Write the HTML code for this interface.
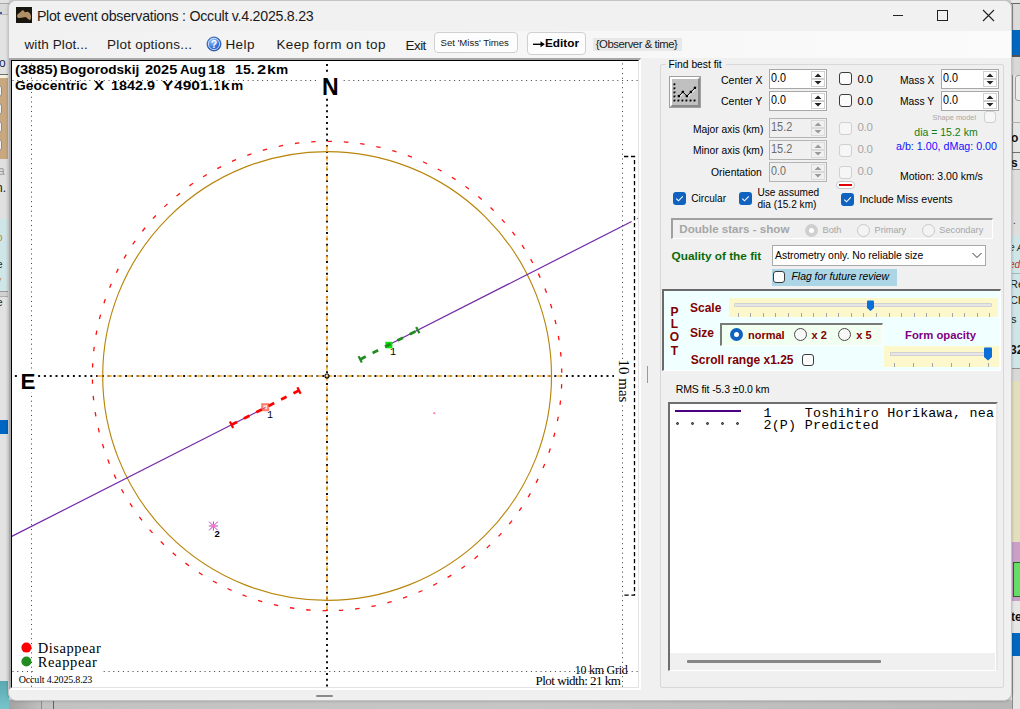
<!DOCTYPE html>
<html><head><meta charset="utf-8"><style>
html,body{margin:0;padding:0;width:1020px;height:709px;overflow:hidden;background:#d6d6d6;font-family:"Liberation Sans",sans-serif;}
.t{position:absolute;white-space:pre;}
.r{position:absolute;box-sizing:border-box;}
svg{position:absolute;}
</style></head><body>

<div class="r" style="left:0px;top:0px;width:9px;height:709px;background:#e2e2e2"></div>
<div class="r" style="left:0px;top:3px;width:9px;height:1px;background:#a8a8a8"></div>
<div class="r" style="left:0px;top:4px;width:9px;height:10px;background:#dadada"></div>
<div class="r" style="left:0px;top:14px;width:9px;height:1px;background:#b8b8b8"></div>
<div class="r" style="left:0px;top:74px;width:9px;height:1px;background:#6e6e6e"></div>
<div class="r" style="left:0px;top:75px;width:9px;height:3px;background:#f6f1dc"></div>
<div class="r" style="left:0px;top:78px;width:9px;height:81px;background:#c9a77f"></div>
<div class="r" style="left:-4px;top:85px;width:6px;height:12px;background:#f4f4f4;border:1px solid #8a8a8a;border-radius:3px"></div>
<div class="r" style="left:-4px;top:103px;width:6px;height:12px;background:#f4f4f4;border:1px solid #8a8a8a;border-radius:3px"></div>
<div class="r" style="left:-4px;top:121px;width:6px;height:12px;background:#f4f4f4;border:1px solid #8a8a8a;border-radius:3px"></div>
<div class="r" style="left:-4px;top:139px;width:6px;height:12px;background:#f4f4f4;border:1px solid #8a8a8a;border-radius:3px"></div>
<div class="r" style="left:0px;top:159px;width:9px;height:60px;background:#e0e0e0"></div>
<div class="r" style="left:0px;top:219px;width:9px;height:72px;background:#cfe6e8"></div>
<div class="r" style="left:0px;top:291px;width:9px;height:6px;background:#d2d2d2;border-top:1px solid #9a9a9a;border-bottom:1px solid #b0b0b0"></div>
<div class="r" style="left:0px;top:420px;width:9px;height:14px;background:#0066c4"></div>
<div class="r" style="left:0px;top:681px;width:9px;height:28px;background:linear-gradient(#5aa9b0,#78c4cc)"></div>
<div class="t" style="left:-1.00px;top:56.84px;font-size:12px;line-height:12px;font-family:'Liberation Sans', sans-serif;color:#1a2a5a;font-weight:normal;">o</div>
<div class="r" style="left:0px;top:12px;width:2px;height:2px;background:#103080;border-radius:1px"></div>
<div class="t" style="left:-2.00px;top:164.84px;font-size:12px;line-height:12px;font-family:'Liberation Sans', sans-serif;color:#999;font-weight:normal;">a</div>
<div class="t" style="left:-4.00px;top:181.84px;font-size:12px;line-height:12px;font-family:'Liberation Sans', sans-serif;color:#111;font-weight:normal;">n.</div>
<div class="t" style="left:-3.00px;top:232.53px;font-size:10px;line-height:10px;font-family:'Liberation Sans', sans-serif;color:#c08020;font-weight:normal;">o</div>
<div class="t" style="left:-3.00px;top:259.54px;font-size:10px;line-height:10px;font-family:'Liberation Sans', sans-serif;color:#222;font-weight:normal;">e</div>
<div class="t" style="left:-6.00px;top:275.54px;font-size:10px;line-height:10px;font-family:'Liberation Sans', sans-serif;color:#c08020;font-weight:normal;">ly</div>
<div class="t" style="left:-3.00px;top:297.54px;font-size:10px;line-height:10px;font-family:'Liberation Sans', sans-serif;color:#222;font-weight:normal;">e</div>
<div class="r" style="left:1011px;top:0px;width:9px;height:709px;background:#e6e6e6"></div>
<div class="r" style="left:1011px;top:3px;width:9px;height:1px;background:#666"></div>
<div class="r" style="left:1011px;top:4px;width:9px;height:26px;background:#dcdcdc"></div>
<div class="r" style="left:1012px;top:3px;width:1px;height:706px;background:#8a8a8a"></div>
<div class="r" style="left:1011px;top:30px;width:9px;height:25px;background:#0067c0"></div>
<div class="r" style="left:1011px;top:55px;width:9px;height:2px;background:#555"></div>
<div class="r" style="left:1011px;top:57px;width:9px;height:18px;background:#d8d8d8"></div>
<div class="r" style="left:1015px;top:75px;width:10px;height:26px;background:#ececec;border:1px solid #a0a0a0;border-radius:3px"></div>
<div class="r" style="left:1011px;top:122px;width:9px;height:1px;background:#b0b0b0"></div>
<div class="r" style="left:1011px;top:152px;width:9px;height:1px;background:#707070"></div>
<div class="r" style="left:1011px;top:169px;width:9px;height:1px;background:#909090"></div>
<div class="r" style="left:1011px;top:170px;width:9px;height:66px;background:#dedede"></div>
<div class="r" style="left:1011px;top:236px;width:9px;height:132px;background:#cfe6e8"></div>
<div class="r" style="left:1011px;top:273px;width:9px;height:1px;background:#a0b8b8"></div>
<div class="r" style="left:1011px;top:368px;width:9px;height:13px;background:#d8d8d8;border-top:1px solid #909090"></div>
<div class="r" style="left:1011px;top:381px;width:9px;height:161px;background:#e2dfbd"></div>
<div class="r" style="left:1011px;top:542px;width:9px;height:59px;background:#c8a0c8"></div>
<div class="r" style="left:1013px;top:562px;width:9px;height:35px;background:#66dd66;border:1px solid #226622"></div>
<div class="r" style="left:1011px;top:601px;width:9px;height:32px;background:#e6e6e6"></div>
<div class="r" style="left:1011px;top:633px;width:9px;height:23px;background:#0067c0"></div>
<div class="t" style="left:1011.00px;top:131.84px;font-size:12px;line-height:12px;font-family:'Liberation Sans', sans-serif;color:#111;font-weight:bold;">o</div>
<div class="t" style="left:1011.00px;top:156.84px;font-size:12px;line-height:12px;font-family:'Liberation Sans', sans-serif;color:#111;font-weight:bold;">s</div>
<div class="t" style="left:1013.00px;top:215.53px;font-size:10px;line-height:10px;font-family:'Liberation Sans', sans-serif;color:#333;font-weight:normal;">.</div>
<div class="t" style="left:1009.00px;top:242.53px;font-size:10px;line-height:10px;font-family:'Liberation Sans', sans-serif;color:#333;font-weight:normal;font-style:italic">e A</div>
<div class="t" style="left:1009.00px;top:259.54px;font-size:10px;line-height:10px;font-family:'Liberation Sans', sans-serif;color:#c03030;font-weight:normal;font-style:italic">ed</div>
<div class="t" style="left:1010.00px;top:278.69px;font-size:11px;line-height:11px;font-family:'Liberation Sans', sans-serif;color:#222;font-weight:normal;">Re</div>
<div class="t" style="left:1010.00px;top:294.69px;font-size:11px;line-height:11px;font-family:'Liberation Sans', sans-serif;color:#222;font-weight:normal;">Ch</div>
<div class="t" style="left:1011.00px;top:313.69px;font-size:11px;line-height:11px;font-family:'Liberation Sans', sans-serif;color:#222;font-weight:normal;">s</div>
<div class="t" style="left:1010.00px;top:343.84px;font-size:12px;line-height:12px;font-family:'Liberation Sans', sans-serif;color:#111;font-weight:bold;">32</div>
<div class="t" style="left:1011.00px;top:610.84px;font-size:12px;line-height:12px;font-family:'Liberation Sans', sans-serif;color:#111;font-weight:bold;">te</div>
<div class="r" style="left:9px;top:700px;width:1003px;height:9px;background:linear-gradient(90deg,#c2c2c2,#c6c6c6 50%,#b8b8b8)"></div>
<div class="r" style="left:9px;top:700px;width:32px;height:9px;background:linear-gradient(90deg,#a2a2a2,#c0c0c0)"></div>
<div class="r" style="left:41px;top:700px;width:1px;height:9px;background:#8c8c8c"></div>
<div class="r" style="left:53px;top:700px;width:1px;height:9px;background:#606060"></div>
<div class="r" style="left:8px;top:0px;width:1004px;height:701px;background:#f0f0f0;border:1px solid #c4c4c4;border-radius:8px;box-shadow:0 0 3px rgba(0,0,0,0.25)"></div>
<div class="r" style="left:9px;top:1px;width:1002px;height:30px;background:#f1f1f1;border-radius:7px 7px 0 0"></div>
<div class="r" style="left:9px;top:31px;width:1002px;height:27px;background:linear-gradient(90deg,#f1f1f1,#fbfbfb)"></div>
<svg style="left:16px;top:7px" width="16" height="16" viewBox="0 0 16 16">
<rect width="16" height="16" fill="#18140e"/>
<path d="M1,9 C1,7.5 2.5,6.5 4,5.5 C5,4.5 6,3 7,3.2 C8,3.4 8.5,5 9,5.2 C10,5 11,4.5 12,4.8 C13.5,5.5 14.5,7 15,9 C15,11 14.8,13 13.7,13 C12.5,12.8 11,11 9.5,10 C8,10 6,11 3.5,11 C2,11 1,10.5 1,9Z" fill="#b08e66"/>
</svg>
<div class="t" style="left:36.90px;top:8.98px;font-size:14.2px;line-height:14.2px;font-family:'Liberation Sans', sans-serif;color:#1b1b1b;font-weight:normal;letter-spacing:-0.258px;">Plot event observations : Occult v.4.2025.8.23</div>
<div class="r" style="left:893px;top:15px;width:10px;height:1px;background:#222"></div>
<div class="r" style="left:937px;top:10px;width:11px;height:11px;border:1px solid #222"></div>
<svg style="left:982px;top:9px" width="13" height="13" viewBox="0 0 13 13"><path d="M1,1 L12,12 M12,1 L1,12" stroke="#222" stroke-width="1.1"/></svg>
<div class="t" style="left:24.50px;top:38.07px;font-size:13.5px;line-height:13.5px;font-family:'Liberation Sans', sans-serif;color:#1b1b1b;font-weight:normal;letter-spacing:0.091px;">with Plot...</div>
<div class="t" style="left:107.10px;top:38.07px;font-size:13.5px;line-height:13.5px;font-family:'Liberation Sans', sans-serif;color:#1b1b1b;font-weight:normal;letter-spacing:0.214px;">Plot options...</div>
<svg style="left:206px;top:36px" width="16" height="16" viewBox="0 0 16 16">
<defs><radialGradient id="hg" cx="0.4" cy="0.3" r="0.8"><stop offset="0" stop-color="#9cc8ff"/><stop offset="0.6" stop-color="#2f6fd8"/><stop offset="1" stop-color="#1a47a8"/></radialGradient></defs>
<circle cx="8" cy="8" r="7" fill="url(#hg)" stroke="#2450a0" stroke-width="0.8"/>
<circle cx="8" cy="8" r="5.6" fill="none" stroke="#e8f0ff" stroke-width="0.8"/>
<text x="8" y="11.8" font-family="Liberation Sans" font-weight="bold" font-size="10" fill="#fff" text-anchor="middle">?</text>
</svg>
<div class="t" style="left:225.40px;top:38.07px;font-size:13.5px;line-height:13.5px;font-family:'Liberation Sans', sans-serif;color:#1b1b1b;font-weight:normal;letter-spacing:0.433px;">Help</div>
<div class="t" style="left:276.40px;top:38.27px;font-size:13.5px;line-height:13.5px;font-family:'Liberation Sans', sans-serif;color:#1b1b1b;font-weight:normal;letter-spacing:0.367px;">Keep form on top</div>
<div class="t" style="left:405.60px;top:38.57px;font-size:13.5px;line-height:13.5px;font-family:'Liberation Sans', sans-serif;color:#1b1b1b;font-weight:normal;letter-spacing:-0.600px;">Exit</div>
<div class="r" style="left:434px;top:32px;width:84px;height:21px;background:#fdfdfd;border:1px solid #d0d0d0;border-radius:4px"></div>
<div class="t" style="left:440.60px;top:38.17px;font-size:9.6px;line-height:9.6px;font-family:'Liberation Sans', sans-serif;color:#1b1b1b;font-weight:normal;letter-spacing:-0.027px;">Set 'Miss' Times</div>
<div class="r" style="left:527px;top:32px;width:59px;height:23px;background:#fdfdfd;border:1px solid #d0d0d0;border-radius:4px"></div>
<svg style="left:532px;top:40px" width="14" height="9" viewBox="0 0 14 9"><path d="M1,4.3 H11.5" stroke="#000" stroke-width="1.4"/><path d="M8.5,1.3 L12.8,4.3 L8.5,7.3 Z" fill="#000"/></svg>
<div class="t" style="left:544.90px;top:37.81px;font-size:11.8px;line-height:11.8px;font-family:'Liberation Sans', sans-serif;color:#000;font-weight:bold;letter-spacing:0.020px;">Editor</div>
<div class="r" style="left:593px;top:38px;width:89px;height:13px;background:#e8e8e8"></div>
<div class="t" style="left:595.80px;top:39.43px;font-size:11.3px;line-height:11.3px;font-family:'Liberation Sans', sans-serif;color:#1b1b1b;font-weight:normal;letter-spacing:-0.450px;">{Observer &amp; time}</div>
<div class="r" style="left:9px;top:58px;width:632px;height:632px;background:#fff;border-top:2px solid #a8a8a8;border-left:2px solid #a8a8a8;border-right:1px solid #fff;border-bottom:2px solid #fff"></div>
<div class="r" style="left:11px;top:60px;width:628px;height:628px;border-top:1px solid #000;border-left:1px solid #000;border-right:1px solid #e3e3e3;border-bottom:1px solid #e3e3e3"></div>
<div class="r" style="left:316px;top:695px;width:17px;height:2px;background:#8a8a8a;border-radius:1px"></div>
<div class="r" style="left:647px;top:366px;width:1px;height:17px;background:#9a9a9a"></div>
<svg style="left:12px;top:61px" width="626" height="626" viewBox="12 61 626 626"><g stroke="#3a3a3a" stroke-width="1">
<line x1="31.5" y1="63.45" x2="31.5" y2="687" stroke-dasharray="1 3.75"/>
<line x1="622.5" y1="63.45" x2="622.5" y2="687" stroke-dasharray="1 3.75"/>
<line x1="12.5" y1="80.5" x2="638" y2="80.5" stroke-dasharray="1 3.8"/>
<line x1="12.5" y1="671.5" x2="638" y2="671.5" stroke-dasharray="1 3.8"/>
</g>
<g stroke="#111" stroke-width="2" stroke-dasharray="2 3.8">
<line x1="14.9" y1="376" x2="614" y2="376"/>
<line x1="327" y1="63.9" x2="327" y2="687"/>
</g>
<g stroke="#ffaa22" stroke-opacity="0.72" stroke-width="2" stroke-dasharray="5 5">
<line x1="97.2" y1="376" x2="562" y2="376"/>
<line x1="327" y1="145.7" x2="327" y2="610.7"/>
</g>
<circle cx="327" cy="376" r="2" fill="none" stroke="#111" stroke-width="1.1"/>
<circle cx="327.1" cy="376.0" r="224.4" fill="none" stroke="#b8860b" stroke-width="1.15"/>
<circle cx="327.1" cy="376.0" r="234.7" fill="none" stroke="#ff1010" stroke-width="1.3" stroke-dasharray="4.4 11.985" stroke-dashoffset="8.18"/>
<g stroke="#7028a8" stroke-width="1.2" fill="none">
<line x1="11.4" y1="536.6" x2="265.5" y2="407.52"/>
<line x1="388.4" y1="345.08" x2="631.6" y2="221.5"/>
</g>
<circle cx="637.5" cy="218.5" r="0.8" fill="#a070d0"/>
<rect x="262.2" y="404.2" width="6" height="6" fill="rgba(255,150,130,0.35)" stroke="rgba(255,90,60,0.75)" stroke-width="2"/>
<rect x="385.4" y="341.8" width="7" height="6.5" fill="#00e600"/>
<line x1="231.50" y1="424.79" x2="299.00" y2="390.50" stroke="#ff0000" stroke-width="2.8" stroke-dasharray="6.2 7.7"/>
<line x1="233.13" y1="428.00" x2="229.87" y2="421.58" stroke="#ff0000" stroke-width="2.2"/>
<line x1="300.63" y1="393.71" x2="297.37" y2="387.29" stroke="#ff0000" stroke-width="2.2"/>
<line x1="360.20" y1="359.41" x2="417.80" y2="330.15" stroke="#228b22" stroke-width="2.8" stroke-dasharray="6.2 7.7"/>
<line x1="361.83" y1="362.62" x2="358.57" y2="356.20" stroke="#228b22" stroke-width="2.2"/>
<line x1="419.43" y1="333.36" x2="416.17" y2="326.94" stroke="#228b22" stroke-width="2.2"/>
<line x1="208.80" y1="526.00" x2="218.00" y2="526.00" stroke="#b048c0" stroke-width="1"/>
<line x1="213.40" y1="521.40" x2="213.40" y2="530.60" stroke="#b048c0" stroke-width="1"/>
<line x1="209.00" y1="521.60" x2="217.80" y2="530.40" stroke="#b048c0" stroke-width="1"/>
<line x1="209.00" y1="530.40" x2="217.80" y2="521.60" stroke="#b048c0" stroke-width="1"/>
<circle cx="213.4" cy="526.0" r="1.8" fill="#ff70c8"/>
<circle cx="434.3" cy="413.2" r="1.1" fill="#ff80c0"/>
<path d="M624,156.5 H634.5 V595.2 H624" fill="none" stroke="#000" stroke-width="1.3" stroke-dasharray="4.3 2.7"/>
<circle cx="26.4" cy="647.6" r="5" fill="#ff0000"/>
<circle cx="26.4" cy="661.5" r="5" fill="#228b22"/></svg>
<div class="t" style="left:14.89px;top:64.02px;font-size:12.5px;line-height:12.5px;font-family:'Liberation Sans', sans-serif;color:#000;font-weight:bold;transform:scaleX(1.1771);transform-origin:0 0;">(3885)</div>
<div class="t" style="left:59.83px;top:64.02px;font-size:12.5px;line-height:12.5px;font-family:'Liberation Sans', sans-serif;color:#000;font-weight:bold;transform:scaleX(1.0857);transform-origin:0 0;">Bogorodskij</div>
<div class="t" style="left:145.04px;top:64.02px;font-size:12.5px;line-height:12.5px;font-family:'Liberation Sans', sans-serif;color:#000;font-weight:bold;transform:scaleX(1.1587);transform-origin:0 0;">2025</div>
<div class="t" style="left:180.28px;top:64.02px;font-size:12.5px;line-height:12.5px;font-family:'Liberation Sans', sans-serif;color:#000;font-weight:bold;transform:scaleX(1.0647);transform-origin:0 0;">Aug</div>
<div class="t" style="left:208.02px;top:64.02px;font-size:12.5px;line-height:12.5px;font-family:'Liberation Sans', sans-serif;color:#000;font-weight:bold;transform:scaleX(1.2266);transform-origin:0 0;">18</div>
<div class="t" style="left:234.79px;top:64.02px;font-size:12.5px;line-height:12.5px;font-family:'Liberation Sans', sans-serif;color:#000;font-weight:bold;transform:scaleX(1.1338);transform-origin:0 0;">15.</div>
<div class="t" style="left:256.98px;top:64.02px;font-size:12.5px;line-height:12.5px;font-family:'Liberation Sans', sans-serif;color:#000;font-weight:bold;transform:scaleX(1.3115);transform-origin:0 0;">2</div>
<div class="t" style="left:266.66px;top:64.02px;font-size:12.5px;line-height:12.5px;font-family:'Liberation Sans', sans-serif;color:#000;font-weight:bold;transform:scaleX(1.2623);transform-origin:0 0;">k</div>
<div class="t" style="left:276.12px;top:64.02px;font-size:12.5px;line-height:12.5px;font-family:'Liberation Sans', sans-serif;color:#000;font-weight:bold;transform:scaleX(1.0938);transform-origin:0 0;">m</div>
<div class="t" style="left:15.04px;top:79.62px;font-size:12.5px;line-height:12.5px;font-family:'Liberation Sans', sans-serif;color:#000;font-weight:bold;transform:scaleX(1.1101);transform-origin:0 0;">Geocentric</div>
<div class="t" style="left:93.88px;top:79.62px;font-size:12.5px;line-height:12.5px;font-family:'Liberation Sans', sans-serif;color:#000;font-weight:bold;transform:scaleX(1.2099);transform-origin:0 0;">X</div>
<div class="t" style="left:110.58px;top:79.62px;font-size:12.5px;line-height:12.5px;font-family:'Liberation Sans', sans-serif;color:#000;font-weight:bold;transform:scaleX(1.1486);transform-origin:0 0;">1842.9</div>
<div class="t" style="left:161.53px;top:79.62px;font-size:12.5px;line-height:12.5px;font-family:'Liberation Sans', sans-serif;color:#000;font-weight:bold;transform:scaleX(1.3544);transform-origin:0 0;">Y</div>
<div class="t" style="left:174.25px;top:79.62px;font-size:12.5px;line-height:12.5px;font-family:'Liberation Sans', sans-serif;color:#000;font-weight:bold;transform:scaleX(1.2417);transform-origin:0 0;">4901.</div>
<div class="t" style="left:214.31px;top:79.62px;font-size:12.5px;line-height:12.5px;font-family:'Liberation Sans', sans-serif;color:#000;font-weight:bold;transform:scaleX(0.8621);transform-origin:0 0;">1</div>
<div class="t" style="left:221.28px;top:79.62px;font-size:12.5px;line-height:12.5px;font-family:'Liberation Sans', sans-serif;color:#000;font-weight:bold;transform:scaleX(1.2459);transform-origin:0 0;">k</div>
<div class="t" style="left:230.62px;top:79.62px;font-size:12.5px;line-height:12.5px;font-family:'Liberation Sans', sans-serif;color:#000;font-weight:bold;transform:scaleX(1.0938);transform-origin:0 0;">m</div>
<div class="r" style="left:317.5px;top:73.5px;width:23px;height:24px;background:#fff"></div>
<div class="t" style="left:322.00px;top:75.53px;font-size:23px;line-height:23px;font-family:'Liberation Sans', sans-serif;color:#000;font-weight:bold;">N</div>
<div class="r" style="left:18px;top:371px;width:20px;height:21px;background:#fff"></div>
<div class="t" style="left:20.50px;top:370.55px;font-size:22.5px;line-height:22.5px;font-family:'Liberation Sans', sans-serif;color:#000;font-weight:bold;">E</div>
<div class="t" style="left:267.00px;top:411.33px;font-size:10px;line-height:10px;font-family:'Liberation Mono', monospace;color:#000;font-weight:normal;">1</div>
<div class="t" style="left:390.00px;top:347.94px;font-size:10px;line-height:10px;font-family:'Liberation Mono', monospace;color:#000;font-weight:normal;">1</div>
<div class="t" style="left:214.50px;top:528.66px;font-size:9.5px;line-height:9.5px;font-family:'Liberation Sans', sans-serif;color:#000;font-weight:bold;">2</div>
<div class="t" style="left:602px;top:373px;width:44px;height:16px;line-height:16px;font-family:'Liberation Serif',serif;font-size:15px;color:#000;background:#fff;transform:rotate(90deg);text-align:center">10 mas</div>
<div class="r" style="left:35px;top:641px;width:67px;height:32px;background:#fff"></div>
<div class="t" style="left:37.70px;top:640.56px;font-size:14.5px;line-height:14.5px;font-family:'Liberation Serif', serif;color:#000;font-weight:normal;letter-spacing:0.537px;">Disappear</div>
<div class="t" style="left:37.70px;top:654.66px;font-size:14.5px;line-height:14.5px;font-family:'Liberation Serif', serif;color:#000;font-weight:normal;letter-spacing:0.643px;">Reappear</div>
<div class="t" style="left:18.80px;top:674.62px;font-size:10px;line-height:10px;font-family:'Liberation Serif', serif;color:#000;font-weight:normal;letter-spacing:-0.188px;">Occult 4.2025.8.23</div>
<div class="t" style="left:574.80px;top:663.85px;font-size:12px;line-height:12px;font-family:'Liberation Serif', serif;color:#000;font-weight:normal;letter-spacing:-0.267px;">10 km Grid</div>
<div class="t" style="left:535.50px;top:673.81px;font-size:13px;line-height:13px;font-family:'Liberation Serif', serif;color:#000;font-weight:normal;letter-spacing:-0.512px;">Plot width: 21 km</div>
<div class="r" style="left:660px;top:64px;width:344px;height:624px;border:1px solid #d8d8d8;border-radius:2px"></div>
<div class="r" style="left:666px;top:58px;width:60px;height:12px;background:#f0f0f0"></div>
<div class="t" style="left:668.50px;top:60.08px;font-size:10.3px;line-height:10.3px;font-family:'Liberation Sans', sans-serif;color:#000;font-weight:normal;">Find best fit</div>
<svg style="left:669px;top:76px" width="32" height="32" viewBox="669 76 32 32">
<rect x="669" y="76" width="32" height="32" fill="#a0a0a0"/>
<path d="M670,77 H700 V107 H670Z" fill="#8a8a8a"/>
<path d="M670,77 H700 L698,79 H672 V105 L670,107Z" fill="#fff"/>
<rect x="672" y="79" width="26" height="26" fill="#c0c0c0"/>
<rect x="674.0" y="83.9" width="2" height="2" fill="#fff"/>
<rect x="674.0" y="87.9" width="2" height="2" fill="#fff"/>
<rect x="674.0" y="92.0" width="2" height="2" fill="#fff"/>
<rect x="674.0" y="96.0" width="2" height="2" fill="#fff"/>
<rect x="674.0" y="100.1" width="2" height="2" fill="#fff"/>
<rect x="678.0" y="100.1" width="2" height="2" fill="#fff"/>
<rect x="682.0" y="100.1" width="2" height="2" fill="#fff"/>
<rect x="686.0" y="100.1" width="2" height="2" fill="#fff"/>
<rect x="690.1" y="100.1" width="2" height="2" fill="#fff"/>
<rect x="694.1" y="100.1" width="2" height="2" fill="#fff"/>
<rect x="678.4" y="95.6" width="2" height="2" fill="#fff"/>
<rect x="682.4" y="91.5" width="2" height="2" fill="#fff"/>
<rect x="686.4" y="95.6" width="2" height="2" fill="#fff"/>
<rect x="690.4" y="91.5" width="2" height="2" fill="#fff"/>
<rect x="694.5" y="87.4" width="2" height="2" fill="#fff"/>
<polyline points="678.9,96.1 682.9,92 686.9,96.1 690.9,92 695,87.9" fill="none" stroke="#fff" stroke-width="1" transform="translate(0.8,0.8)"/>
<polyline points="678.9,96.1 682.9,92 686.9,96.1 690.9,92 695,87.9" fill="none" stroke="#000" stroke-width="1"/>
<rect x="673.5" y="83.4" width="2" height="2" fill="#000"/>
<rect x="673.5" y="87.4" width="2" height="2" fill="#000"/>
<rect x="673.5" y="91.5" width="2" height="2" fill="#000"/>
<rect x="673.5" y="95.5" width="2" height="2" fill="#000"/>
<rect x="673.5" y="99.6" width="2" height="2" fill="#000"/>
<rect x="677.5" y="99.6" width="2" height="2" fill="#000"/>
<rect x="681.5" y="99.6" width="2" height="2" fill="#000"/>
<rect x="685.5" y="99.6" width="2" height="2" fill="#000"/>
<rect x="689.6" y="99.6" width="2" height="2" fill="#000"/>
<rect x="693.6" y="99.6" width="2" height="2" fill="#000"/>
<rect x="677.7" y="94.9" width="2.4" height="2.4" fill="#000"/>
<rect x="681.7" y="90.8" width="2.4" height="2.4" fill="#000"/>
<rect x="685.7" y="94.9" width="2.4" height="2.4" fill="#000"/>
<rect x="689.7" y="90.8" width="2.4" height="2.4" fill="#000"/>
<rect x="693.8" y="86.7" width="2.4" height="2.4" fill="#000"/>
</svg>
<div class="t" style="left:721.00px;top:74.91px;font-size:10.5px;line-height:10.5px;font-family:'Liberation Sans', sans-serif;color:#000;font-weight:normal;">Center X</div>
<div class="t" style="left:721.00px;top:96.41px;font-size:10.5px;line-height:10.5px;font-family:'Liberation Sans', sans-serif;color:#000;font-weight:normal;">Center Y</div>
<div class="r" style="left:769px;top:69px;width:58px;height:20px;background:#fff;border:1px solid #a8a8a8"></div>
<div class="t" style="left:771.27px;top:71.92px;font-size:12.5px;line-height:12.5px;font-family:'Liberation Sans', sans-serif;color:#000;font-weight:normal;transform:scaleX(0.8598);transform-origin:0 0;">0.0</div>
<div class="r" style="left:811px;top:71px;width:14px;height:8px;border:1px solid #d0d0d0;background:#fff"></div>
<div class="r" style="left:811px;top:79px;width:14px;height:8px;border:1px solid #d0d0d0;background:#fff"></div>
<svg style="left:811px;top:71px" width="14" height="16" viewBox="0 0 14 16"><path d="M3.5,6 L7,2.5 L10.5,6Z M3.5,10 L7,13.5 L10.5,10Z" fill="#222"/></svg>
<div class="r" style="left:769px;top:91px;width:58px;height:20px;background:#fff;border:1px solid #a8a8a8"></div>
<div class="t" style="left:771.27px;top:93.92px;font-size:12.5px;line-height:12.5px;font-family:'Liberation Sans', sans-serif;color:#000;font-weight:normal;transform:scaleX(0.8598);transform-origin:0 0;">0.0</div>
<div class="r" style="left:811px;top:93px;width:14px;height:8px;border:1px solid #d0d0d0;background:#fff"></div>
<div class="r" style="left:811px;top:101px;width:14px;height:8px;border:1px solid #d0d0d0;background:#fff"></div>
<svg style="left:811px;top:93px" width="14" height="16" viewBox="0 0 14 16"><path d="M3.5,6 L7,2.5 L10.5,6Z M3.5,10 L7,13.5 L10.5,10Z" fill="#222"/></svg>
<div class="t" style="left:693.00px;top:124.58px;font-size:10.3px;line-height:10.3px;font-family:'Liberation Sans', sans-serif;color:#000;font-weight:normal;">Major axis (km)</div>
<div class="t" style="left:693.00px;top:146.28px;font-size:10.3px;line-height:10.3px;font-family:'Liberation Sans', sans-serif;color:#000;font-weight:normal;">Minor axis (km)</div>
<div class="t" style="left:711.00px;top:167.70px;font-size:10.4px;line-height:10.4px;font-family:'Liberation Sans', sans-serif;color:#000;font-weight:normal;">Orientation</div>
<div class="r" style="left:769px;top:118px;width:58px;height:20px;background:#f0f0f0;border:1px solid #b4b4b4"></div>
<div class="t" style="left:770.91px;top:120.92px;font-size:12.5px;line-height:12.5px;font-family:'Liberation Sans', sans-serif;color:#6d6d6d;font-weight:normal;transform:scaleX(0.8772);transform-origin:0 0;">15.2</div>
<div class="r" style="left:811px;top:120px;width:14px;height:8px;border:1px solid #dadada;background:#f0f0f0"></div>
<div class="r" style="left:811px;top:128px;width:14px;height:8px;border:1px solid #dadada;background:#f0f0f0"></div>
<svg style="left:811px;top:120px" width="14" height="16" viewBox="0 0 14 16"><path d="M3.5,6 L7,2.5 L10.5,6Z M3.5,10 L7,13.5 L10.5,10Z" fill="#9a9a9a"/></svg>
<div class="r" style="left:769px;top:140px;width:58px;height:20px;background:#f0f0f0;border:1px solid #b4b4b4"></div>
<div class="t" style="left:770.91px;top:142.92px;font-size:12.5px;line-height:12.5px;font-family:'Liberation Sans', sans-serif;color:#6d6d6d;font-weight:normal;transform:scaleX(0.8772);transform-origin:0 0;">15.2</div>
<div class="r" style="left:811px;top:142px;width:14px;height:8px;border:1px solid #dadada;background:#f0f0f0"></div>
<div class="r" style="left:811px;top:150px;width:14px;height:8px;border:1px solid #dadada;background:#f0f0f0"></div>
<svg style="left:811px;top:142px" width="14" height="16" viewBox="0 0 14 16"><path d="M3.5,6 L7,2.5 L10.5,6Z M3.5,10 L7,13.5 L10.5,10Z" fill="#9a9a9a"/></svg>
<div class="r" style="left:769px;top:162px;width:58px;height:20px;background:#f0f0f0;border:1px solid #b4b4b4"></div>
<div class="t" style="left:771.27px;top:164.92px;font-size:12.5px;line-height:12.5px;font-family:'Liberation Sans', sans-serif;color:#6d6d6d;font-weight:normal;transform:scaleX(0.8598);transform-origin:0 0;">0.0</div>
<div class="r" style="left:811px;top:164px;width:14px;height:8px;border:1px solid #dadada;background:#f0f0f0"></div>
<div class="r" style="left:811px;top:172px;width:14px;height:8px;border:1px solid #dadada;background:#f0f0f0"></div>
<svg style="left:811px;top:164px" width="14" height="16" viewBox="0 0 14 16"><path d="M3.5,6 L7,2.5 L10.5,6Z M3.5,10 L7,13.5 L10.5,10Z" fill="#9a9a9a"/></svg>
<div class="r" style="left:839px;top:72px;width:12.5px;height:12.5px;background:#fbfbfb;border:1px solid #3c3c3c;border-radius:3px"></div>
<div class="r" style="left:839px;top:94px;width:12.5px;height:12.5px;background:#fbfbfb;border:1px solid #3c3c3c;border-radius:3px"></div>
<div class="t" style="left:857.50px;top:74.07px;font-size:11.5px;line-height:11.5px;font-family:'Liberation Sans', sans-serif;color:#000;font-weight:normal;letter-spacing:-0.3px">0.0</div>
<div class="t" style="left:857.50px;top:96.07px;font-size:11.5px;line-height:11.5px;font-family:'Liberation Sans', sans-serif;color:#000;font-weight:normal;letter-spacing:-0.3px">0.0</div>
<div class="r" style="left:839px;top:122px;width:12.5px;height:12.5px;background:#f6f6f6;border:1px solid #d0d0d0;border-radius:3px"></div>
<div class="t" style="left:857.50px;top:121.87px;font-size:11.5px;line-height:11.5px;font-family:'Liberation Sans', sans-serif;color:#a6a6a6;font-weight:normal;letter-spacing:-0.3px">0.0</div>
<div class="r" style="left:839px;top:144px;width:12.5px;height:12.5px;background:#f6f6f6;border:1px solid #d0d0d0;border-radius:3px"></div>
<div class="t" style="left:857.50px;top:143.77px;font-size:11.5px;line-height:11.5px;font-family:'Liberation Sans', sans-serif;color:#a6a6a6;font-weight:normal;letter-spacing:-0.3px">0.0</div>
<div class="r" style="left:839px;top:166px;width:12.5px;height:12.5px;background:#f6f6f6;border:1px solid #d0d0d0;border-radius:3px"></div>
<div class="t" style="left:857.50px;top:165.77px;font-size:11.5px;line-height:11.5px;font-family:'Liberation Sans', sans-serif;color:#a6a6a6;font-weight:normal;letter-spacing:-0.3px">0.0</div>
<div class="r" style="left:836px;top:181px;width:19px;height:8px;background:#fff;border:1px solid #c8c8c8;border-radius:4px"></div>
<div class="r" style="left:839px;top:184px;width:13px;height:2px;background:#e00000"></div>
<div class="t" style="left:900.00px;top:75.68px;font-size:10.3px;line-height:10.3px;font-family:'Liberation Sans', sans-serif;color:#000;font-weight:normal;">Mass X</div>
<div class="t" style="left:900.00px;top:97.38px;font-size:10.3px;line-height:10.3px;font-family:'Liberation Sans', sans-serif;color:#000;font-weight:normal;">Mass Y</div>
<div class="r" style="left:941px;top:69px;width:58px;height:20px;background:#fff;border:1px solid #a8a8a8"></div>
<div class="t" style="left:943.27px;top:71.92px;font-size:12.5px;line-height:12.5px;font-family:'Liberation Sans', sans-serif;color:#000;font-weight:normal;transform:scaleX(0.8598);transform-origin:0 0;">0.0</div>
<div class="r" style="left:983px;top:71px;width:14px;height:8px;border:1px solid #d0d0d0;background:#fff"></div>
<div class="r" style="left:983px;top:79px;width:14px;height:8px;border:1px solid #d0d0d0;background:#fff"></div>
<svg style="left:983px;top:71px" width="14" height="16" viewBox="0 0 14 16"><path d="M3.5,6 L7,2.5 L10.5,6Z M3.5,10 L7,13.5 L10.5,10Z" fill="#222"/></svg>
<div class="r" style="left:941px;top:91px;width:58px;height:20px;background:#fff;border:1px solid #a8a8a8"></div>
<div class="t" style="left:943.27px;top:93.92px;font-size:12.5px;line-height:12.5px;font-family:'Liberation Sans', sans-serif;color:#000;font-weight:normal;transform:scaleX(0.8598);transform-origin:0 0;">0.0</div>
<div class="r" style="left:983px;top:93px;width:14px;height:8px;border:1px solid #d0d0d0;background:#fff"></div>
<div class="r" style="left:983px;top:101px;width:14px;height:8px;border:1px solid #d0d0d0;background:#fff"></div>
<svg style="left:983px;top:93px" width="14" height="16" viewBox="0 0 14 16"><path d="M3.5,6 L7,2.5 L10.5,6Z M3.5,10 L7,13.5 L10.5,10Z" fill="#222"/></svg>
<div class="t" style="left:932.50px;top:113.74px;font-size:7.4px;line-height:7.4px;font-family:'Liberation Sans', sans-serif;color:#a8a8a8;font-weight:normal;">Shape model</div>
<div class="r" style="left:984px;top:111px;width:12px;height:12px;background:#f6f6f6;border:1px solid #d0d0d0;border-radius:3px"></div>
<div class="t" style="left:914.30px;top:126.71px;font-size:10.5px;line-height:10.5px;font-family:'Liberation Sans', sans-serif;color:#108010;font-weight:normal;">dia = 15.2 km</div>
<div class="t" style="left:896.00px;top:141.34px;font-size:10.7px;line-height:10.7px;font-family:'Liberation Sans', sans-serif;color:#1010ff;font-weight:normal;">a/b: 1.00, dMag: 0.00</div>
<div class="t" style="left:900.00px;top:170.81px;font-size:10.5px;line-height:10.5px;font-family:'Liberation Sans', sans-serif;color:#000;font-weight:normal;">Motion: 3.00 km/s</div>
<div class="r" style="left:673px;top:192px;width:13px;height:13px;background:#0f62c0;border-radius:3px"></div>
<svg style="left:673px;top:192px" width="13" height="13" viewBox="0 0 13 13"><path d="M3.3,6.6 L5.5,8.8 L9.8,4.4" fill="none" stroke="#fff" stroke-width="1.1"/></svg>
<div class="t" style="left:691.30px;top:194.45px;font-size:10.1px;line-height:10.1px;font-family:'Liberation Sans', sans-serif;color:#000;font-weight:normal;">Circular</div>
<div class="r" style="left:739px;top:192px;width:13px;height:13px;background:#0f62c0;border-radius:3px"></div>
<svg style="left:739px;top:192px" width="13" height="13" viewBox="0 0 13 13"><path d="M3.3,6.6 L5.5,8.8 L9.8,4.4" fill="none" stroke="#fff" stroke-width="1.1"/></svg>
<div class="t" style="left:757.50px;top:187.65px;font-size:10.1px;line-height:10.1px;font-family:'Liberation Sans', sans-serif;color:#000;font-weight:normal;">Use assumed</div>
<div class="t" style="left:757.50px;top:200.05px;font-size:10.1px;line-height:10.1px;font-family:'Liberation Sans', sans-serif;color:#000;font-weight:normal;">dia (15.2 km)</div>
<div class="r" style="left:841px;top:192.5px;width:13px;height:13px;background:#0f62c0;border-radius:3px"></div>
<svg style="left:841px;top:192.5px" width="13" height="13" viewBox="0 0 13 13"><path d="M3.3,6.6 L5.5,8.8 L9.8,4.4" fill="none" stroke="#fff" stroke-width="1.1"/></svg>
<div class="t" style="left:859.50px;top:194.03px;font-size:10.6px;line-height:10.6px;font-family:'Liberation Sans', sans-serif;color:#000;font-weight:normal;">Include Miss events</div>
<div class="r" style="left:671px;top:218px;width:322px;height:21px;border-top:2px solid #a0a0a0;border-left:2px solid #a0a0a0;border-right:1px solid #fff;border-bottom:1px solid #fff"></div>
<div class="t" style="left:679.30px;top:222.78px;font-size:11.6px;line-height:11.6px;font-family:'Liberation Sans', sans-serif;color:#a6a6a6;font-weight:bold;">Double stars - show</div>
<div class="r" style="left:805px;top:223.5px;width:13px;height:13px;border-radius:50%;background:#cfcfcf"></div>
<div class="r" style="left:809px;top:227.5px;width:5px;height:5px;border-radius:50%;background:#fff"></div>
<div class="t" style="left:822.50px;top:226.21px;font-size:9.2px;line-height:9.2px;font-family:'Liberation Sans', sans-serif;color:#a6a6a6;font-weight:normal;">Both</div>
<div class="r" style="left:856.5px;top:223.5px;width:13px;height:13px;border-radius:50%;border:1px solid #c8c8c8;background:#f4f4f4"></div>
<div class="t" style="left:874.50px;top:226.21px;font-size:9.2px;line-height:9.2px;font-family:'Liberation Sans', sans-serif;color:#a6a6a6;font-weight:normal;">Primary</div>
<div class="r" style="left:921.8px;top:223.5px;width:13px;height:13px;border-radius:50%;border:1px solid #c8c8c8;background:#f4f4f4"></div>
<div class="t" style="left:939.30px;top:226.21px;font-size:9.2px;line-height:9.2px;font-family:'Liberation Sans', sans-serif;color:#a6a6a6;font-weight:normal;">Secondary</div>
<div class="t" style="left:671.50px;top:251.11px;font-size:11.8px;line-height:11.8px;font-family:'Liberation Sans', sans-serif;color:#0a6a0a;font-weight:bold;">Quality of the fit</div>
<div class="r" style="left:772px;top:245px;width:214px;height:21px;background:#fff;border:1px solid #a8a8a8"></div>
<div class="t" style="left:775.00px;top:251.00px;font-size:10.4px;line-height:10.4px;font-family:'Liberation Sans', sans-serif;color:#000;font-weight:normal;">Astrometry only. No reliable size</div>
<svg style="left:971px;top:250px" width="12" height="10" viewBox="0 0 12 10"><path d="M1.5,3 L6,7.5 L10.5,3" fill="none" stroke="#333" stroke-width="1"/></svg>
<div class="r" style="left:772px;top:269px;width:125px;height:17px;background:#acd6e6"></div>
<div class="r" style="left:773px;top:270.5px;width:12px;height:12px;background:#fbfbfb;border:1px solid #3c3c3c;border-radius:3px"></div>
<div class="t" style="left:791.50px;top:272.20px;font-size:10.4px;line-height:10.4px;font-family:'Liberation Sans', sans-serif;color:#000;font-weight:normal;font-style:italic">Flag for future review</div>
<div class="r" style="left:662px;top:289px;width:339px;height:82px;background:#f0ffff;border-top:2px solid #6a6a6a;border-left:2px solid #6a6a6a;border-right:1px solid #fff;border-bottom:1px solid #fff"></div>
<div class="t" style="left:668px;top:305.74px;width:13px;text-align:center;font-size:12px;line-height:12px;font-weight:bold;color:#800000">P</div>
<div class="t" style="left:668px;top:318.04px;width:13px;text-align:center;font-size:12px;line-height:12px;font-weight:bold;color:#800000">L</div>
<div class="t" style="left:668px;top:331.34px;width:13px;text-align:center;font-size:12px;line-height:12px;font-weight:bold;color:#800000">O</div>
<div class="t" style="left:668px;top:344.54px;width:13px;text-align:center;font-size:12px;line-height:12px;font-weight:bold;color:#800000">T</div>
<div class="t" style="left:690.00px;top:301.64px;font-size:12px;line-height:12px;font-family:'Liberation Sans', sans-serif;color:#800000;font-weight:bold;">Scale</div>
<div class="t" style="left:690.00px;top:327.44px;font-size:12px;line-height:12px;font-family:'Liberation Sans', sans-serif;color:#800000;font-weight:bold;">Size</div>
<div class="t" style="left:690.80px;top:354.04px;font-size:12px;line-height:12px;font-family:'Liberation Sans', sans-serif;color:#800000;font-weight:bold;">Scroll range x1.25</div>
<div class="r" style="left:802px;top:354px;width:12px;height:12px;background:#fbfbfb;border:1px solid #3c3c3c;border-radius:3px"></div>
<div class="r" style="left:729px;top:298px;width:269px;height:19px;background:#fdf7cc"></div>
<div class="r" style="left:734px;top:303px;width:258px;height:4px;background:#e6e6e6;border:1px solid #d2d2d2;border-radius:1px"></div>
<div class="r" style="left:738px;top:313px;width:1px;height:4px;background:#a4a4a4"></div>
<div class="r" style="left:750px;top:313px;width:1px;height:4px;background:#a4a4a4"></div>
<div class="r" style="left:763px;top:313px;width:1px;height:4px;background:#a4a4a4"></div>
<div class="r" style="left:775px;top:313px;width:1px;height:4px;background:#a4a4a4"></div>
<div class="r" style="left:788px;top:313px;width:1px;height:4px;background:#a4a4a4"></div>
<div class="r" style="left:801px;top:313px;width:1px;height:4px;background:#a4a4a4"></div>
<div class="r" style="left:813px;top:313px;width:1px;height:4px;background:#a4a4a4"></div>
<div class="r" style="left:826px;top:313px;width:1px;height:4px;background:#a4a4a4"></div>
<div class="r" style="left:838px;top:313px;width:1px;height:4px;background:#a4a4a4"></div>
<div class="r" style="left:851px;top:313px;width:1px;height:4px;background:#a4a4a4"></div>
<div class="r" style="left:863px;top:313px;width:1px;height:4px;background:#a4a4a4"></div>
<div class="r" style="left:876px;top:313px;width:1px;height:4px;background:#a4a4a4"></div>
<div class="r" style="left:889px;top:313px;width:1px;height:4px;background:#a4a4a4"></div>
<div class="r" style="left:901px;top:313px;width:1px;height:4px;background:#a4a4a4"></div>
<div class="r" style="left:914px;top:313px;width:1px;height:4px;background:#a4a4a4"></div>
<div class="r" style="left:926px;top:313px;width:1px;height:4px;background:#a4a4a4"></div>
<div class="r" style="left:939px;top:313px;width:1px;height:4px;background:#a4a4a4"></div>
<div class="r" style="left:952px;top:313px;width:1px;height:4px;background:#a4a4a4"></div>
<div class="r" style="left:964px;top:313px;width:1px;height:4px;background:#a4a4a4"></div>
<div class="r" style="left:977px;top:313px;width:1px;height:4px;background:#a4a4a4"></div>
<div class="r" style="left:989px;top:313px;width:1px;height:4px;background:#a4a4a4"></div>
<svg style="left:865.5px;top:300px" width="9" height="12" viewBox="0 0 9 12"><path d="M1,1.5 Q1,0.5 2,0.5 H7 Q8,0.5 8,1.5 V8 L4.5,11 L1,8Z" fill="#0a6fd6"/></svg>
<div class="r" style="left:720px;top:323px;width:163px;height:23px;background:#f0fff0;border-top:2px solid #7a7a7a;border-left:2px solid #7a7a7a;border-right:1px solid #fff;border-bottom:1px solid #fff"></div>
<div class="r" style="left:730px;top:328px;width:13px;height:13px;border-radius:50%;background:#0f62c0"></div>
<div class="r" style="left:734px;top:332px;width:5px;height:5px;border-radius:50%;background:#fff"></div>
<div class="t" style="left:748.00px;top:329.89px;font-size:11px;line-height:11px;font-family:'Liberation Sans', sans-serif;color:#800000;font-weight:bold;">normal</div>
<div class="r" style="left:793.9px;top:328px;width:13px;height:13px;border-radius:50%;border:1px solid #4a4a4a;background:#f8f8f8"></div>
<div class="t" style="left:811.50px;top:329.89px;font-size:11px;line-height:11px;font-family:'Liberation Sans', sans-serif;color:#800000;font-weight:bold;">x 2</div>
<div class="r" style="left:838px;top:328px;width:13px;height:13px;border-radius:50%;border:1px solid #4a4a4a;background:#f8f8f8"></div>
<div class="t" style="left:856.30px;top:329.89px;font-size:11px;line-height:11px;font-family:'Liberation Sans', sans-serif;color:#800000;font-weight:bold;">x 5</div>
<div class="t" style="left:905.00px;top:329.63px;font-size:11.3px;line-height:11.3px;font-family:'Liberation Sans', sans-serif;color:#800080;font-weight:bold;">Form opacity</div>
<div class="r" style="left:884px;top:346px;width:115px;height:21px;background:#fdf7cc"></div>
<div class="r" style="left:890px;top:352px;width:102px;height:4px;background:#e6e6e6;border:1px solid #d2d2d2"></div>
<div class="r" style="left:894px;top:363px;width:1px;height:4px;background:#a4a4a4"></div>
<div class="r" style="left:913px;top:363px;width:1px;height:4px;background:#a4a4a4"></div>
<div class="r" style="left:932px;top:363px;width:1px;height:4px;background:#a4a4a4"></div>
<div class="r" style="left:951px;top:363px;width:1px;height:4px;background:#a4a4a4"></div>
<div class="r" style="left:969px;top:363px;width:1px;height:4px;background:#a4a4a4"></div>
<div class="r" style="left:988px;top:363px;width:1px;height:4px;background:#a4a4a4"></div>
<svg style="left:983px;top:347px" width="10" height="14" viewBox="0 0 10 14"><path d="M1,1.5 Q1,0.5 2,0.5 H8 Q9,0.5 9,1.5 V10 L5,13.5 L1,10Z" fill="#0a6fd6"/></svg>
<div class="t" style="left:675.70px;top:384.11px;font-size:10.5px;line-height:10.5px;font-family:'Liberation Sans', sans-serif;color:#000;font-weight:normal;letter-spacing:-0.1px">RMS fit -5.3 ±0.0 km</div>
<div class="r" style="left:668px;top:402px;width:330px;height:269px;background:#fff;border-top:2px solid #6e6e6e;border-left:2px solid #6e6e6e;border-right:2px solid #e8e8e8;border-bottom:1px solid #fff"></div>
<div class="r" style="left:670px;top:653px;width:325px;height:17px;background:#f0f0f0"></div>
<div class="r" style="left:687px;top:660px;width:194px;height:3px;background:#858585;border-radius:1px"></div>
<div class="r" style="left:675px;top:410px;width:66px;height:2px;background:#4b0082"></div>
<div class="r" style="left:675.9px;top:422px;width:3px;height:3px;background:#666;border:1px solid #222;border-radius:50%"></div>
<div class="r" style="left:690.9px;top:422px;width:3px;height:3px;background:#666;border:1px solid #222;border-radius:50%"></div>
<div class="r" style="left:705.9px;top:422px;width:3px;height:3px;background:#666;border:1px solid #222;border-radius:50%"></div>
<div class="r" style="left:720.9px;top:422px;width:3px;height:3px;background:#666;border:1px solid #222;border-radius:50%"></div>
<div class="r" style="left:735.9px;top:422px;width:3px;height:3px;background:#666;border:1px solid #222;border-radius:50%"></div>
<div style="position:absolute;left:0;top:0;width:1020px;height:709px;clip-path:polygon(670px 404px,994px 404px,994px 653px,670px 653px)">
<div class="t" style="left:763.50px;top:406.78px;font-size:13.33px;line-height:13.33px;font-family:'Liberation Mono', monospace;color:#000;font-weight:normal;letter-spacing:0.16px">1</div>
<div class="t" style="left:804.80px;top:406.78px;font-size:13.33px;line-height:13.33px;font-family:'Liberation Mono', monospace;color:#000;font-weight:normal;letter-spacing:0.24px">Toshihiro Horikawa, nea</div>
<div class="t" style="left:763.50px;top:418.78px;font-size:13.33px;line-height:13.33px;font-family:'Liberation Mono', monospace;color:#000;font-weight:normal;letter-spacing:0.16px">2(P)</div>
<div class="t" style="left:804.80px;top:418.78px;font-size:13.33px;line-height:13.33px;font-family:'Liberation Mono', monospace;color:#000;font-weight:normal;letter-spacing:0.24px">Predicted</div>
</div>
</body></html>
